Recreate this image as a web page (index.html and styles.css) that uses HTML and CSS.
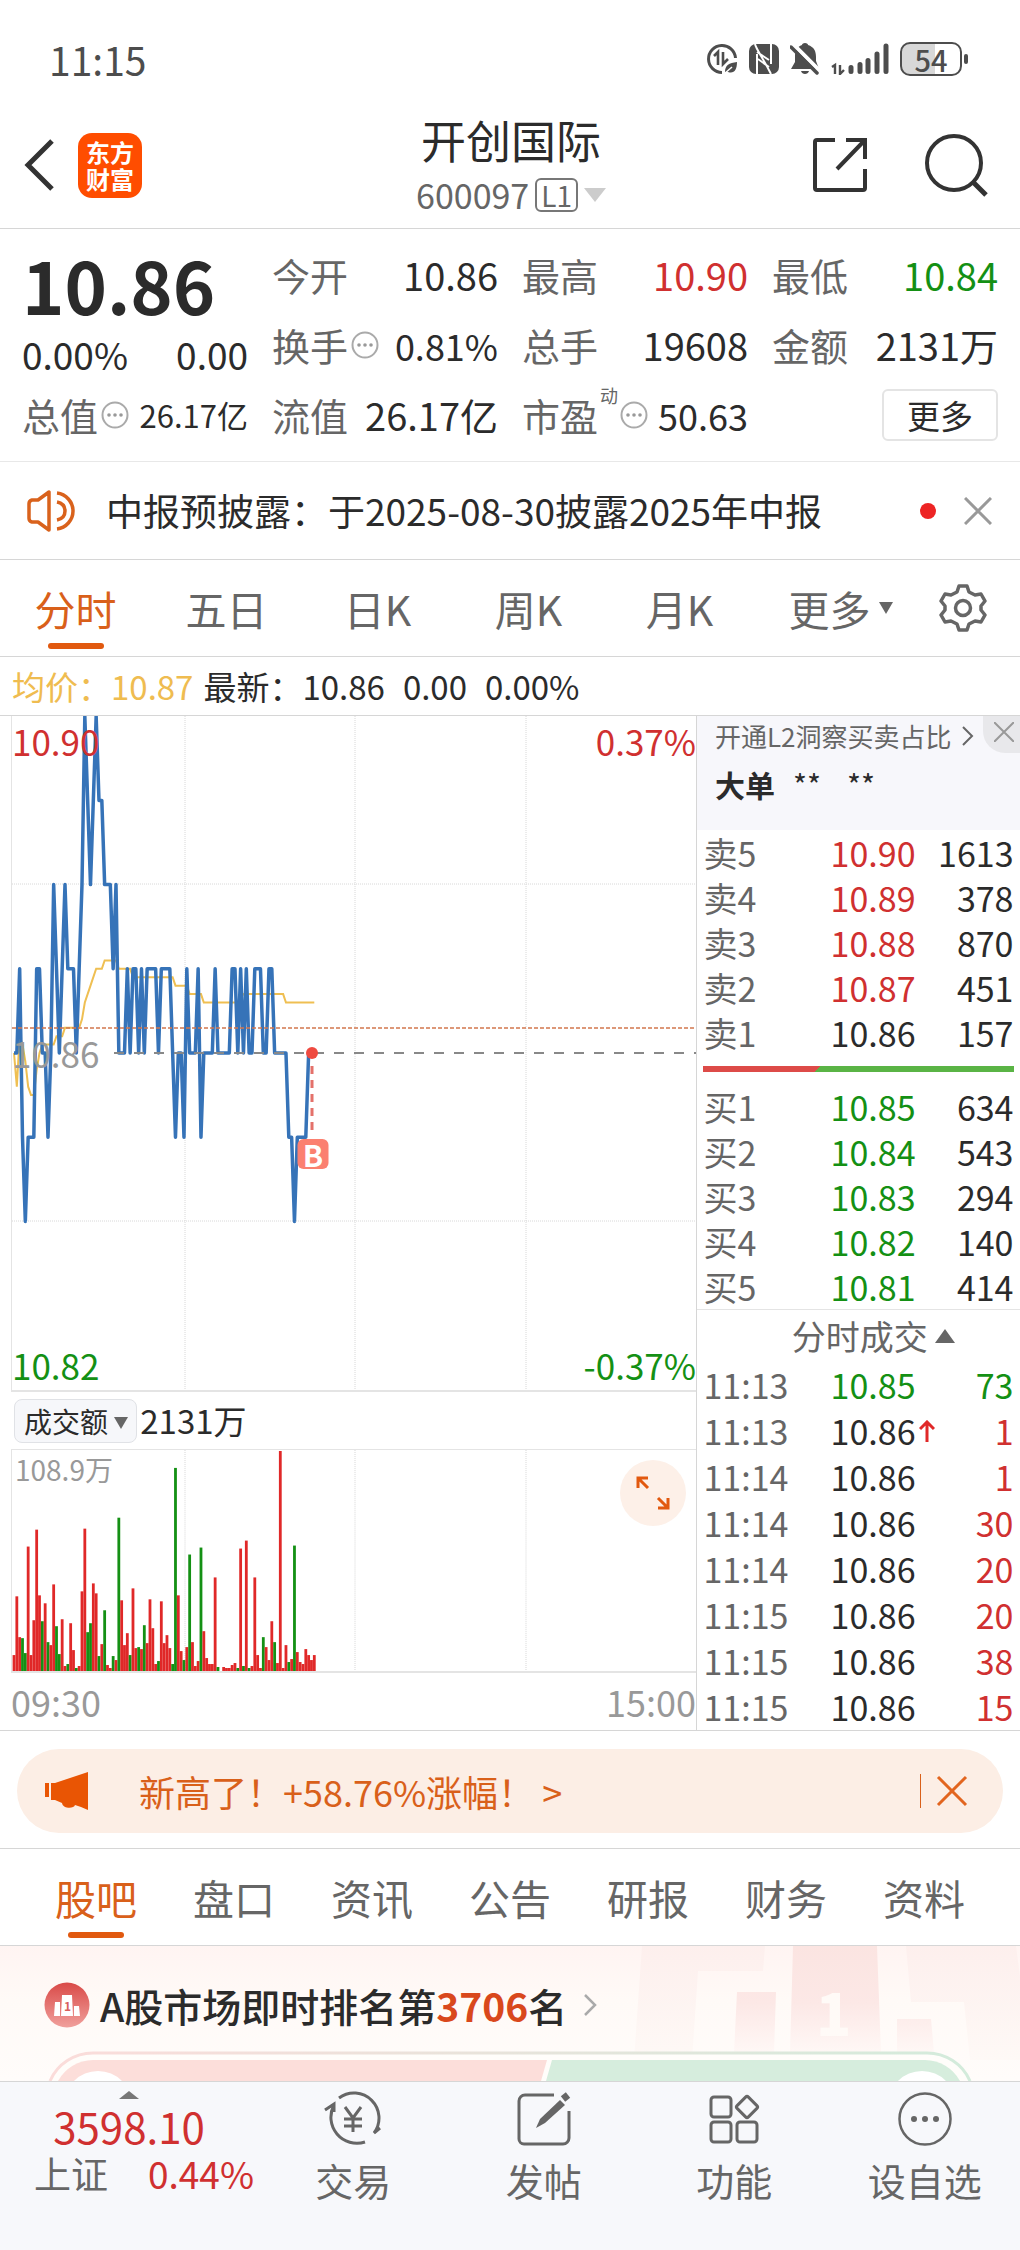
FILE: index.html
```
<!DOCTYPE html>
<html lang="zh-CN">
  <head>
    <meta charset="utf-8">
    <title>开创国际 600097</title>
    <meta name="viewport" content="width=device-width, initial-scale=1">
    <link rel="stylesheet" href="styles.css">
  </head>
  <body>
    <div class="status">
      <span class="status__time">11:15</span>
      <svg class="status__icon" width="32" height="32" viewBox="0 0 32 32" fill="none" stroke="#4d4d4d" stroke-width="3">
        <path d="M16 29.500A13.500 13.500 0 1 1 29.500 15"/>
        <path d="M8 13l4-4v13M17 9v12l5-5" stroke-width="2.600"/>
        <path d="M19 29c0-7 4-9 12-10 0 8-3 12-9 10" fill="#4d4d4d" stroke="none"/>
        <path d="M18 31l8-7" stroke="#fff" stroke-width="1.500"/>
      </svg>
      <svg class="status__icon" width="30" height="32" viewBox="0 0 30 32">
        <rect y="1" width="30" height="30" rx="7" fill="#4d4d4d"/>
        <path d="M8 31V11M22 1v20" fill="none" stroke="#fff" stroke-width="2"/>
        <path d="M6 1c1 5 8 14 16 30M8 9l12 8M9 16l11 8" fill="none" stroke="#fff" stroke-width="2"/>
      </svg>
      <svg class="status__icon" width="30" height="32" viewBox="0 0 30 32" fill="#4d4d4d">
        <path d="M15 0c2 0 3 1 3 2 6 2 8 6 8 12v4l3 8H1l4-7v-6c0-5 2-9 7-11 0-1 1-2 3-2zM11 28h8c-1 4-7 4-8 0z"/>
        <path d="M3 1l28 28" stroke="#fff" stroke-width="4"/>
        <path d="M1 4l26 26" stroke="#4d4d4d" stroke-width="3.500" stroke-linecap="round"/>
      </svg>
      <svg class="status__icon" width="58" height="32" viewBox="0 0 58 32" fill="none" stroke="#4d4d4d">
        <path d="M1 24l3-2v9M9 22v9l4-4" stroke-width="2.400"/>
        <path d="M20 24.500v4M29 21.500v7M37 17.500v11M46 11v17.500M55 3v25.500" stroke-width="5" stroke-linecap="round"/>
      </svg>
      <span class="battery">54</span>
    </div>

    <header class="header">
      <div class="header__side">
        <button class="icon-button" aria-label="返回">
          <svg width="32" height="54" viewBox="0 0 32 54" fill="none" stroke="#333" stroke-width="5"><path d="M29 3L5 27l24 24"/></svg>
        </button>
        <span class="logo">东方<br>财富</span>
      </div>
      <div class="header__center">
        <h1 class="header__name">开创国际</h1>
        <button class="header__code">600097 <span class="header__level">L1</span>
          <svg width="22" height="14" viewBox="0 0 22 14"><path d="M0 0h22L11 14z" fill="#ccc"/></svg>
        </button>
      </div>
      <div class="header__side header__side--right">
        <button class="icon-button" aria-label="分享">
          <svg width="56" height="56" viewBox="0 0 56 56" fill="none" stroke="#333" stroke-width="4"><path d="M23 3H5a2 2 0 0 0-2 2v46a2 2 0 0 0 2 2h46a2 2 0 0 0 2-2V32M34 3h19v19M53 3L25 32"/></svg>
        </button>
        <button class="icon-button" aria-label="搜索">
          <svg width="64" height="64" viewBox="0 0 64 64" fill="none" stroke="#333" stroke-width="4"><circle cx="29" cy="30" r="27"/><path d="M48 49l13 13" stroke-width="5"/></svg>
        </button>
      </div>
    </header>

    <section class="quote">
      <div class="quote__main">
        <strong class="quote__price">10.86</strong>
        <div class="quote__change"><span>0.00%</span><span>0.00</span></div>
      </div>
      <div class="cell"><span class="cell__label">今开</span><span>10.86</span></div>
      <div class="cell"><span class="cell__label">最高</span><span class="up">10.90</span></div>
      <div class="cell"><span class="cell__label">最低</span><span class="down">10.84</span></div>
      <div class="cell"><span class="cell__label">换手<svg class="dots" viewBox="0 0 28 28"><use href="#dots"/></svg></span><span class="cell__mid">0.81%</span></div>
      <div class="cell"><span class="cell__label">总手</span><span>19608</span></div>
      <div class="cell"><span class="cell__label">金额</span><span>2131万</span></div>
      <div class="cell"><span class="cell__label">总值<svg class="dots" viewBox="0 0 28 28"><use href="#dots"/></svg></span><span class="cell__small">26.17亿</span></div>
      <div class="cell"><span class="cell__label">流值</span><span>26.17亿</span></div>
      <div class="cell"><span class="cell__label">市盈<sup>动</sup><svg class="dots" viewBox="0 0 28 28"><use href="#dots"/></svg></span><span class="cell__mid">50.63</span></div>
      <div class="cell cell--end"><button class="more">更多</button></div>
    </section>

    <div class="notice">
      <svg class="notice__icon" width="50" height="42" viewBox="0 0 50 42" fill="none" stroke="#d9621c" stroke-width="3.500" stroke-linejoin="round">
        <path d="M22 2v38L11 32H5a4 4 0 0 1-3-4V14a4 4 0 0 1 3-4h6zM30 3c9 1 16 9 16 18s-7 17-16 18M30 12c5 1 8 4 8 9s-3 8-8 9"/>
      </svg>
      <a class="notice__text" href="#">中报预披露：于2025-08-30披露2025年中报</a>
      <span class="notice__dot"></span>
      <button class="icon-button" aria-label="关闭">
        <svg width="28" height="28" viewBox="0 0 28 28" stroke="#999" stroke-width="3"><path d="M1 1l26 26M27 1L1 27"/></svg>
      </button>
    </div>

    <nav class="tabs tabs--periods">
      <button class="tab is-active">分时</button>
      <button class="tab">五日</button>
      <button class="tab">日K</button>
      <button class="tab">周K</button>
      <button class="tab">月K</button>
      <button class="tab tab--more">更多<svg width="14" height="12" viewBox="0 0 14 12"><path d="M0 0h14L7 12z" fill="#666"/></svg></button>
      <button class="tab" aria-label="设置">
        <svg width="48" height="48" viewBox="0 0 48 48" fill="none" stroke="#666" stroke-width="3.500" stroke-linejoin="round">
          <path d="M20 2h8l2 6 6 3 6-1 4 7-4 5v4l4 5-4 7-6-1-6 3-2 6h-8l-2-6-6-3-6 1-4-7 4-5v-4l-4-5 4-7 6 1 6-3z"/><circle cx="24" cy="24" r="7.500"/>
        </svg>
      </button>
    </nav>

    <p class="info"><span class="info__avg">均价：10.87</span><span>最新：10.86</span><span class="info__gap">0.00</span><span class="info__gap">0.00%</span></p>

    <main class="market">
      <section class="charts">
        <div class="plot plot--price">
          <svg viewBox="0 0 684 674" preserveAspectRatio="none" fill="none">
            <path class="grid" d="M173 0v674M343 0v674M514 0v674M0 168h684M0 505h684"/>
            <polyline id="avg-line" stroke="#efbf52" stroke-width="2"/>
            <polyline id="price-line" stroke="#3673b8" stroke-width="3.500" stroke-linejoin="round"/>
            <path d="M0 312h684" stroke="#d2774e" stroke-width="1.500" stroke-dasharray="4 2"/>
            <path d="M102 337h582" stroke="#888" stroke-width="2" stroke-dasharray="10 10"/>
            <path d="M300 350v64" stroke="#e4716a" stroke-width="3" stroke-dasharray="8 6"/>
            <circle cx="300" cy="337" r="6" fill="#ef4a40"/>
          </svg>
          <span class="plot__label up">10.90</span>
          <span class="plot__label plot__label--right up">0.37%</span>
          <span class="plot__label plot__label--mid">10.86</span>
          <span class="plot__label plot__label--bottom down">10.82</span>
          <span class="plot__label plot__label--right plot__label--bottom down">-0.37%</span>
          <span class="buy-mark">B</span>
        </div>
        <div class="volume-head"><button class="volume-head__pick">成交额 <svg width="14" height="12" viewBox="0 0 14 12"><path d="M0 0h14L7 12z" fill="#666"/></svg></button><span>2131万</span></div>
        <div class="plot plot--volume">
          <svg viewBox="0 0 684 222" preserveAspectRatio="none" fill="none">
            <path class="grid" d="M173 0v222M343 0v222M514 0v222"/>
            <g id="bars"></g>
          </svg>
          <span class="plot__label plot__label--small">108.9万</span>
          <button class="expand" aria-label="全屏">
            <svg width="34" height="34" viewBox="0 0 34 34" fill="none" stroke="#e2590f" stroke-width="3"><path d="M2 12V2h10M2 2l10 10M22 32h10V22M32 32L22 22"/></svg>
          </button>
        </div>
        <div class="axis"><span>09:30</span><span>15:00</span></div>
      </section>

      <aside class="book">
        <div class="book__promo">
          <a class="book__link" href="#">开通L2洞察买卖占比<svg width="12" height="20" viewBox="0 0 12 20" fill="none" stroke="#666" stroke-width="2"><path d="M1 1l9 9-9 9"/></svg></a>
          <button class="book__close" aria-label="关闭"><svg width="20" height="20" viewBox="0 0 20 20" stroke="#999" stroke-width="2"><path d="M0 0l20 20M20 0L0 20"/></svg></button>
          <p class="book__big"><strong>大单</strong><span>**</span><span>**</span></p>
        </div>
        <table class="orders">
          <tr><th>卖5</th><td class="up">10.90</td><td>1613</td></tr>
          <tr><th>卖4</th><td class="up">10.89</td><td>378</td></tr>
          <tr><th>卖3</th><td class="up">10.88</td><td>870</td></tr>
          <tr><th>卖2</th><td class="up">10.87</td><td>451</td></tr>
          <tr><th>卖1</th><td>10.86</td><td>157</td></tr>
        </table>
        <div class="ratio"></div>
        <table class="orders">
          <tr><th>买1</th><td class="down">10.85</td><td>634</td></tr>
          <tr><th>买2</th><td class="down">10.84</td><td>543</td></tr>
          <tr><th>买3</th><td class="down">10.83</td><td>294</td></tr>
          <tr><th>买4</th><td class="down">10.82</td><td>140</td></tr>
          <tr><th>买5</th><td class="down">10.81</td><td>414</td></tr>
        </table>
        <button class="book__title">分时成交 <svg width="20" height="14" viewBox="0 0 20 14"><path d="M10 0l10 14H0z" fill="#666"/></svg></button>
        <table class="orders orders--trades">
          <tr><th>11:13</th><td class="down">10.85</td><td class="down">73</td></tr>
          <tr><th>11:13</th><td>10.86<svg class="tick" width="16" height="22" viewBox="0 0 16 22" fill="none" stroke="#e02828" stroke-width="3"><path d="M8 22V3M1 9l7-7 7 7"/></svg></td><td class="up">1</td></tr>
          <tr><th>11:14</th><td>10.86</td><td class="up">1</td></tr>
          <tr><th>11:14</th><td>10.86</td><td class="up">30</td></tr>
          <tr><th>11:14</th><td>10.86</td><td class="up">20</td></tr>
          <tr><th>11:15</th><td>10.86</td><td class="up">20</td></tr>
          <tr><th>11:15</th><td>10.86</td><td class="up">38</td></tr>
          <tr><th>11:15</th><td>10.86</td><td class="up">15</td></tr>
        </table>
      </aside>
    </main>

    <div class="banner">
      <div class="banner__pill">
        <svg width="44" height="38" viewBox="0 0 44 38" fill="#e95504"><path d="M0 11h4v14H0zM6 11h4L43 0v38l-7-3-6-2c-1 4-12 4-13-2l-7-3H6z"/></svg>
        <a class="banner__text" href="#">新高了！+58.76%涨幅！ &gt;</a>
        <button class="banner__close" aria-label="关闭"><svg width="32" height="32" viewBox="0 0 32 32" stroke="#e2651f" stroke-width="3"><path d="M2 2l28 28M30 2L2 30"/></svg></button>
      </div>
    </div>

    <nav class="tabs tabs--sections">
      <button class="tab is-active">股吧</button>
      <button class="tab">盘口</button>
      <button class="tab">资讯</button>
      <button class="tab">公告</button>
      <button class="tab">研报</button>
      <button class="tab">财务</button>
      <button class="tab">资料</button>
    </nav>

    <section class="rank">
      <svg class="rank__podium" width="420" height="136" viewBox="0 0 420 136">
        <defs>
          <linearGradient id="fade" gradientUnits="userSpaceOnUse" x1="0" y1="0" x2="0" y2="114"><stop stop-color="#fbe4e1"/><stop offset=".5" stop-color="#fce8e6"/><stop offset="1" stop-color="#fffaf8"/></linearGradient>
          <linearGradient id="fade-light" gradientUnits="userSpaceOnUse" x1="0" y1="0" x2="0" y2="114"><stop stop-color="#fdefed"/><stop offset="1" stop-color="#fef9f6"/></linearGradient>
        </defs>
        <path fill="url(#fade-light)" d="M42 0h123l-2 25H98l-6 89H34zM306 0h110l4 30v84h-50l-6-58h-53z"/>
        <path fill="url(#fade)" d="M137 46h39l-2 61h-40zM193 0h84l4 107h-91zM297 73h34l3 34h-37z"/>
        <text x="216" y="90" fill="#fffaf7" font-size="58" font-weight="900">1</text>
      </svg>
      <a class="rank__title" href="#">
        <svg width="46" height="46" viewBox="0 0 46 46">
          <defs><linearGradient id="badge" x1="0" y1="0" x2="0" y2="1"><stop stop-color="#d94a48"/><stop offset="1" stop-color="#f0a09c"/></linearGradient></defs>
          <circle cx="23" cy="23" r="22.500" fill="url(#badge)"/>
          <path d="M11 20h5v14h-6zM18 13h10l1 21H17zM30 24h5l1 10h-6z" fill="#fff"/>
          <text x="20" y="29" fill="#d9605c" font-size="12" font-weight="700">1</text>
        </svg>
        <span>A股市场即时排名第<em>3706</em>名</span>
        <svg class="rank__arrow" width="14" height="24" viewBox="0 0 14 24" fill="none" stroke="#aaa" stroke-width="2.500"><path d="M2 2l10 10L2 22"/></svg>
      </a>
      <svg class="rank__gauge" viewBox="0 0 1020 31" preserveAspectRatio="none">
        <defs><linearGradient id="rim"><stop stop-color="#fbdcda"/><stop offset="1" stop-color="#d3ebdb"/></linearGradient></defs>
        <path d="M50 31A47 47 0 0 1 93 3H927A47 47 0 0 1 970 31" fill="#fffdfa" stroke="url(#rim)" stroke-width="3"/>
        <path d="M58 31A40 40 0 0 1 93 10H547L541 31z" fill="#fcdeda"/>
        <path d="M552 10H925A40 40 0 0 1 960 31H546z" fill="#d6eddd"/>
        <circle cx="98" cy="55" r="34" fill="#fff"/><circle cx="922" cy="55" r="34" fill="#fff"/>
      </svg>
    </section>

    <footer class="dock">
      <a class="dock__index" href="#">
        <svg width="20" height="8" viewBox="0 0 20 8"><path d="M10 0l10 8H0z" fill="#777"/></svg>
        <span class="dock__value">3598.10</span>
        <span class="dock__row"><span>上证</span><span class="up">0.44%</span></span>
      </a>
      <a class="dock__item" href="#">
        <svg width="62" height="56" viewBox="0 0 62 56" fill="none" stroke="#666" stroke-width="3">
          <path d="M17 7a25 25 0 0 1 35 35l6-5M12 14a26 26 0 0 0 31 37M3 19l9-6v8"/>
          <path d="M23 16l8 11 8-11M31 27v14M22 28h18M22 35h18"/>
        </svg>
        <span>交易</span>
      </a>
      <a class="dock__item" href="#">
        <svg width="56" height="56" viewBox="0 0 56 56" fill="none" stroke="#666" stroke-width="3">
          <path d="M38 4H9a6 6 0 0 0-6 6v38a5 5 0 0 0 5 5h39a6 6 0 0 0 6-6V20"/>
          <path d="M20 37l4-9 20-19 5 5-20 18z" fill="#666" stroke="none"/><path d="M47 8l5-4" stroke-width="7"/>
        </svg>
        <span>发帖</span>
      </a>
      <a class="dock__item" href="#">
        <svg width="52" height="56" viewBox="0 0 52 56" fill="none" stroke="#666" stroke-width="3">
          <rect x="3" y="6" width="20" height="20" rx="3"/><rect x="3" y="31" width="20" height="20" rx="3"/><rect x="29" y="31" width="20" height="20" rx="3"/>
          <rect x="31" y="8" width="16" height="16" rx="2" transform="rotate(45 39 16)"/>
        </svg>
        <span>功能</span>
      </a>
      <a class="dock__item" href="#">
        <svg width="56" height="56" viewBox="0 0 56 56" fill="#666">
          <circle cx="28" cy="28" r="25.500" fill="none" stroke="#666" stroke-width="2.500"/><circle cx="17" cy="28" r="3"/><circle cx="28" cy="28" r="3"/><circle cx="39" cy="28" r="3"/>
        </svg>
        <span>设自选</span>
      </a>
    </footer>

    <svg class="sprite" aria-hidden="true">
      <symbol id="dots" viewBox="0 0 28 28">
        <circle cx="14" cy="14" r="12.500" fill="none" stroke="#aaa" stroke-width="2"/>
        <circle cx="8" cy="14" r="1.800" fill="#999"/><circle cx="14" cy="14" r="1.800" fill="#999"/><circle cx="20" cy="14" r="1.800" fill="#999"/>
      </symbol>
    </svg>

    <script src="script.js"></script>
  </body>
</html>
```
FILE: styles.css
```
/* Base */
* {
  box-sizing: border-box;
}

body {
  background: #fff;
  color: #2b2b2b;
  display: flex;
  flex-direction: column;
  font-family: "Noto Sans CJK SC", sans-serif;
  font-size: 38px;
  margin: 0;
  min-height: 100vh;
}

a {
  color: inherit;
  text-decoration: none;
}

button {
  background: none;
  border: 0;
  color: inherit;
  font: inherit;
  padding: 0;
}

svg {
  flex: none;
}

.up {
  color: #d03030;
}

.down {
  color: #149014;
}

.icon-button {
  display: flex;
}

.sprite {
  display: none;
}

/* Status bar */
.status {
  align-items: center;
  color: #4d4d4d;
  display: flex;
  line-height: 50px;
  padding: 34px 58px 14px 49px;
}

.status__time {
  font-size: 39px;
  margin-right: auto;
}

.status__icon {
  margin-right: 11px;
}

.battery {
  background: linear-gradient(90deg, #d8d8d8 57%, #fff 57%);
  border: 2px solid #4d4d4d;
  border-radius: 10px;
  font-size: 29px;
  font-weight: 500;
  line-height: 30px;
  position: relative;
  text-align: center;
  width: 62px;
}

.battery::after {
  background: #4d4d4d;
  border-radius: 2px;
  content: "";
  height: 10px;
  position: absolute;
  right: -8px;
  top: 10px;
  width: 4px;
}

/* Header */
.header {
  align-items: center;
  border-bottom: 1px solid #d6d6d6;
  display: flex;
  padding: 12px 31px 8px 23px;
}

.header__side {
  align-items: center;
  display: flex;
  flex: 1;
  gap: 23px;
}

.header__side--right {
  gap: 57px;
  justify-content: flex-end;
}

.header__center {
  padding-left: 10px;
  text-align: center;
}

.header__name {
  font-size: 45px;
  font-weight: 400;
  line-height: 60px;
  margin: 0;
}

.header__code {
  align-items: center;
  color: #666;
  display: flex;
  font-size: 34px;
  gap: 6px;
  line-height: 50px;
}

.header__level {
  border: 2px solid #777;
  border-radius: 6px;
  font-size: 28px;
  line-height: 30px;
  padding: 0 4px;
}

.logo {
  background: #ff4d00;
  border-radius: 14px;
  color: #fff;
  font-size: 24px;
  font-weight: 700;
  line-height: 27px;
  padding: 5px 8px 6px;
}

/* Quote */
.quote {
  border-bottom: 1px solid #e8e8e8;
  column-gap: 24px;
  display: grid;
  grid-template-columns: repeat(4, 1fr);
  line-height: 70px;
  padding: 11px 22px;
}

.quote__main {
  grid-row: span 2;
}

.quote__price {
  display: block;
  font-size: 72px;
  font-weight: 700;
  line-height: 88px;
}

.quote__change {
  display: flex;
  font-size: 37px;
  justify-content: space-between;
  line-height: 52px;
}

.cell {
  align-items: center;
  display: flex;
  justify-content: space-between;
  white-space: nowrap;
}

.cell--end {
  justify-content: flex-end;
}

.cell__label {
  align-items: center;
  color: #666;
  display: flex;
}

.cell__label sup {
  align-self: flex-start;
  font-size: 18px;
  line-height: 30px;
  margin: 0 2px;
}

.cell__small {
  font-size: 31px;
}

.cell__mid {
  font-size: 36px;
}

.dots {
  height: 28px;
  margin-left: 3px;
  width: 28px;
}

.cell__label sup + .dots {
  margin-left: 0;
}

.more {
  border: 2px solid #e4e4e4;
  border-radius: 6px;
  font-size: 33px;
  line-height: 48px;
  padding: 0 23px;
}

/* Notice */
.notice {
  align-items: center;
  border-bottom: 1px solid #d6d6d6;
  display: flex;
  line-height: 97px;
  padding: 0 28px 0 27px;
}

.notice__text {
  flex: 1;
  font-size: 37px;
  margin-left: 29px;
  white-space: nowrap;
}

.notice__dot {
  background: #ed2424;
  border-radius: 50%;
  height: 16px;
  margin-right: 28px;
  width: 16px;
}

/* Tabs */
.tabs {
  border-bottom: 1px solid #d6d6d6;
  display: grid;
}

.tabs--periods {
  grid-template-columns: repeat(6, 1fr) 114px;
}

.tabs--sections {
  grid-template-columns: repeat(7, 1fr);
  padding: 0 27px;
}

.tab {
  align-items: center;
  color: #666;
  display: flex;
  font-size: 41px;
  justify-content: center;
  line-height: 96px;
  position: relative;
}

.tab.is-active {
  color: #d9601a;
}

.tab.is-active::after {
  background: #e1590f;
  border-radius: 3px;
  bottom: 7px;
  content: "";
  height: 6px;
  left: calc(50% - 28px);
  position: absolute;
  width: 56px;
}

.tab--more {
  gap: 8px;
  padding-left: 20px;
}

/* Info line */
.info {
  border-bottom: 1px solid #d6d6d6;
  display: flex;
  font-size: 33px;
  line-height: 58px;
  margin: 0;
  padding: 0 12px;
}

.info__avg {
  color: #efbc50;
  margin-right: 10px;
}

.info__gap {
  margin-left: 18px;
}

/* Charts */
.market {
  border-bottom: 1px solid #d6d6d6;
  display: flex;
}

.charts {
  border-right: 1px solid #d6d6d6;
  flex: 1;
  min-width: 0;
  padding-left: 11px;
}

.plot {
  border: solid #e4e4e4;
  border-width: 0 0 2px 1px;
  display: grid;
  position: relative;
}

.plot > svg {
  display: block;
  grid-area: 1 / 1;
  height: 100%;
  width: 100%;
}

.plot--price {
  height: 676px;
}

.plot--volume {
  border-top-width: 1px;
  height: 224px;
}

.grid {
  stroke: #d8d8d8;
  stroke-dasharray: 1 1;
}

.plot__label {
  align-self: start;
  font-size: 35px;
  grid-area: 1 / 1;
  justify-self: start;
  line-height: 50px;
}

.plot__label--right {
  justify-self: end;
}

.plot__label--mid {
  align-self: center;
  color: #999;
}

.plot__label--bottom {
  align-self: end;
}

.plot__label--small {
  color: #999;
  font-size: 28px;
  line-height: 38px;
  margin-left: 3px;
}

.buy-mark {
  background: #fb8070;
  border-radius: 6px;
  color: #fff;
  font-size: 30px;
  font-weight: 700;
  left: 44%;
  line-height: 30px;
  position: absolute;
  text-align: center;
  top: 65%;
  transform: translate(-50%, -50%);
  width: 31px;
}

.volume-head {
  align-items: center;
  display: flex;
  font-size: 33px;
  gap: 3px;
  line-height: 57px;
}

.volume-head__pick {
  background: #f6f7fa;
  border: 1px solid #e0e2e6;
  border-radius: 8px;
  font-size: 28px;
  line-height: 42px;
  margin-left: 3px;
  padding: 0 8px 0 9px;
}

.volume-head__pick svg {
  vertical-align: 4px;
}

.expand {
  align-items: center;
  background: #fdf0e8;
  border-radius: 50%;
  display: flex;
  grid-area: 1 / 1;
  height: 66px;
  justify-content: center;
  justify-self: end;
  margin: 10px 10px 0 0;
  width: 66px;
}

.axis {
  color: #999;
  display: flex;
  font-size: 36px;
  justify-content: space-between;
  line-height: 56px;
}

/* Order book */
.book {
  flex: 0 0 323px;
  font-size: 34px;
}

.book__promo {
  background: #f7f7fb;
  color: #666;
  padding: 0 18px 17px;
  position: relative;
}

.book__link {
  align-items: center;
  display: flex;
  font-size: 26px;
  gap: 10px;
  line-height: 39px;
}

.book__close {
  background: #e8e8eb;
  border-bottom-left-radius: 22px;
  display: flex;
  padding: 6px 6px 11px 11px;
  position: absolute;
  right: 0;
  top: 0;
}

.book__big {
  color: #2b2b2b;
  display: flex;
  font-size: 30px;
  gap: 26px;
  line-height: 58px;
  margin: 0;
}

.book__big strong {
  margin-right: -8px;
}

.orders {
  border-collapse: collapse;
  line-height: 45px;
  margin: 0 auto;
  table-layout: fixed;
  width: 310px;
}

.orders--trades {
  line-height: 46px;
}

.orders th,
.orders td {
  padding: 0;
  text-align: left;
  white-space: nowrap;
}

.orders th {
  color: #666;
  font-weight: 400;
  width: 41%;
}

.orders td:last-child {
  text-align: right;
  width: 26%;
}

.tick {
  margin-left: 3px;
  vertical-align: 3px;
}

.ratio {
  background: linear-gradient(135deg, #dd4b48 37%, #5ab445 37%);
  height: 6px;
  margin: 11px 6px 12px;
}

.book__title {
  border-top: 1px solid #e4e4e4;
  color: #666;
  line-height: 52px;
  padding-left: 30px;
  width: 100%;
}

.book__title svg {
  vertical-align: 7px;
}

/* Banner */
.banner {
  border-bottom: 1px solid #d6d6d6;
  padding: 18px 17px 15px;
}

.banner__pill {
  align-items: center;
  background: #fceee5;
  border-radius: 42px;
  color: #d9601a;
  display: flex;
  font-size: 36px;
  line-height: 84px;
  padding: 0 35px 0 28px;
}

.banner__text {
  flex: 1;
  margin-left: 50px;
}

.banner__close {
  border-left: 1px solid #d9601a;
  display: flex;
  padding: 1px 0 1px 15px;
}

/* Ranking */
.rank {
  background: linear-gradient(#fff4f2, #fffaf7 40%, #fffcfa);
  padding-top: 35px;
  position: relative;
}

.rank__podium {
  position: absolute;
  right: 0;
  top: 0;
}

.rank__title {
  align-items: center;
  display: flex;
  font-size: 39px;
  font-weight: 500;
  gap: 10px;
  line-height: 48px;
  padding-left: 44px;
  position: relative;
}

.rank__title em {
  color: #d9481c;
  font-style: normal;
  font-weight: 700;
}

.rank__arrow {
  margin-left: 6px;
}

.rank__gauge {
  display: block;
  height: 31px;
  margin-top: 21px;
  position: relative;
  width: 100%;
}

/* Bottom bar */
.dock {
  background: #f7f8fb;
  border-top: 1px solid #d6d6d6;
  color: #666;
  display: flex;
  flex: 1;
  line-height: 46px;
  padding-top: 9px;
}

.dock__index {
  align-items: center;
  display: flex;
  flex: 0 0 258px;
  flex-direction: column;
}

.dock__value {
  color: #d03030;
  font-size: 42px;
  line-height: 54px;
}

.dock__row {
  display: flex;
  font-size: 37px;
  gap: 40px;
  line-height: 40px;
  padding-left: 30px;
}

.dock__item {
  align-items: center;
  display: flex;
  flex: 1;
  flex-direction: column;
  gap: 10px;
}
```
FILE: script.js
```
// One entry per minute from 09:30, in cents above or below 10.86
var prices = [
  0, 0, 1, -1, -2, -1, -1, -1, 1, 1, 0, 0, -1, 0, 2, 1, 0, 1, 2, 1, 1, 1, 0, 1, 2, 4, 3, 2, 3, 4,
  3, 3, 2, 2, 2, 1, 2, 0, 0, 0, 1, 0, 1, 1, 0, 1, 0, 1, 1, 1, 1, 0, 1, 1, 1, 1, 0, -1, 0, 0,
  -1, 1, 0, 0, 0, 1, -1, 0, 0, 0, 0, 1, 0, 0, 0, 0, 0, 1, 1, 0, 1, 0, 1, 0, 0, 1, 1, 1, 0, 0,
  1, 1, 0, 0, 0, 0, 0, -1, -1, -2, -1, -1, -1, -1, 0, 0
];

// Average price: [minute, cents]
var average = [
  [0, 0], [1, -0.4], [2, 0.2], [3, 0.1], [4, -0.1], [5, -0.4], [6, -0.5], [7, -0.5], [8, -0.2],
  [9, 0], [10, 0.1], [14, 0.1], [15, 0.2], [17, 0.2], [18, 0.3], [23, 0.3], [24, 0.4], [25, 0.6],
  [27, 0.8], [29, 1], [31, 1], [32, 1.1], [36, 1.1], [37, 1], [41, 1], [42, 0.9], [56, 0.9],
  [57, 0.8], [61, 0.8], [62, 0.7], [66, 0.7], [67, 0.6], [79, 0.6], [81, 0.7], [95, 0.7],
  [96, 0.6], [106, 0.6]
];

// Turnover bars, negative when the price fell
var volumes = [
  16, 75, 34, -33, -18, 125, 16, 51, 142, 76, -50, 68, -29, 26, 87, -45, -17, 52, 5, -7, 48, 21, -3, 5,
  80, 143, -39, -48, 88, 78, -15, 27, -61, 6, 3, -15, 11, -154, 71, 26, 38, -16, 83, 23, -24, 22,
  -46, 28, 72, 43, 7, -10, 70, 28, 36, 23, -7, -204, 76, 20, -11, 24, -117, 29, 5, 10, -124, 40,
  13, 7, 7, 94, -4, 0, 4, 3, 3, 6, 8, -3, 123, -5, 131, -3, 5, 94, 16, 3, -34, 24, 11, 50, -29, 8,
  221, 3, 26, -9, 12, -126, 19, 9, 7, 22, 16, 11, 16
];

function x (minute) {
  return 2 + minute * 2.833;
}

function y (cents) {
  return 337 - cents * 84.2;
}

document.getElementById("price-line").setAttribute("points", prices.map(function (p, i) {
  return x(i) + "," + y(p);
}).join(" "));

document.getElementById("avg-line").setAttribute("points", average.map(function (p) {
  return x(p[0]) + "," + y(p[1]);
}).join(" "));

document.getElementById("bars").innerHTML = volumes.map(function (v, i) {
  var height = Math.abs(v);
  return "<rect x='" + (x(i) - 1.4) + "' y='" + (222 - height) + "' width='2.800' height='" + height +
    "' fill='" + (v < 0 ? "#149014" : "#e02828") + "'/>";
}).join("");
```
